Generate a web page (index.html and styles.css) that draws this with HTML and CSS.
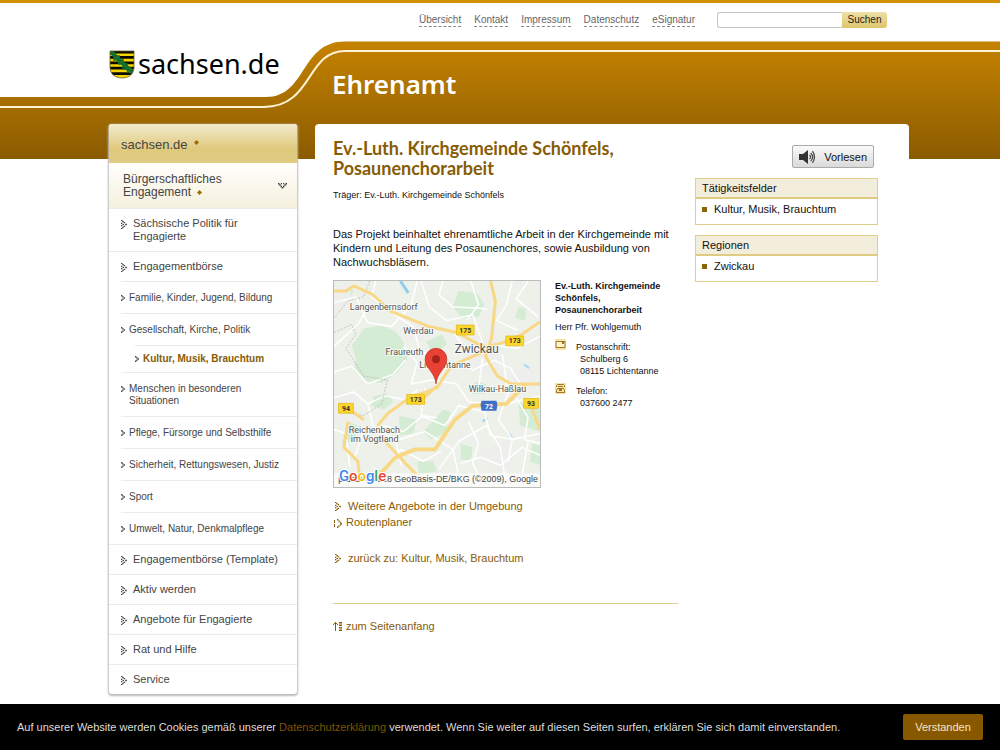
FILE: index.html
```html
<!DOCTYPE html>
<html lang="de">
<head>
<meta charset="utf-8">
<title>Ehrenamt - sachsen.de</title>
<link rel="stylesheet" href="styles.css">
</head>
<body>
<svg class="defs" width="0" height="0" aria-hidden="true">
  <symbol id="dots" viewBox="0 0 6 9"><path d="M0 0h1.500v1H0zM1.300 .9h1.500v1.300H1.300zM2.600 2h1.500v1.300H2.600zM4.200 3.700h1.700v1.600H4.200zM2.600 5.700h1.500V7H2.600zM1.300 6.800h1.500v1.300H1.300zM0 8h1.500v1H0zM0 2.800h1.300V4H0zM1.500 3.900h1.500v1.200H1.500zM0 5h1.300v1.200H0z"/></symbol>
  <symbol id="arrow" viewBox="0 0 4 6"><path d="M0 0h1.400v1.400H0zM1.200 1.200h1.400v1.400H1.200zM2.600 2.300H4v1.400H2.600zM1.200 3.400h1.400v1.400H1.200zM0 4.600h1.400V6H0z"/></symbol>
  <symbol id="spark" viewBox="0 0 5 5"><path d="M2.500 0L5 2.500 2.500 5 0 2.500z"/></symbol>
</svg>

<header class="header">
  <svg class="band" viewBox="0 0 1000 159" preserveAspectRatio="xMidYMin meet" aria-hidden="true">
    <defs><linearGradient id="gold" gradientUnits="userSpaceOnUse" x1="0" y1="42" x2="0" y2="159"><stop offset="0" stop-color="#c58200"/><stop offset=".75" stop-color="#996500"/><stop offset="1" stop-color="#8b5b00"/></linearGradient></defs>
    <path fill="url(#gold)" d="M-2000 97H266C307 97 300 41.500 345 41.500H3000V159H-2000z"/>
    <path fill="none" stroke="#fff3d6" stroke-width="2" d="M-2000 107H264C313 107 306 51 345 51H3000"/>
  </svg>
  <div class="wrap">
    <div class="topline">
      <nav class="meta">
        <a href="#">Übersicht</a><a href="#">Kontakt</a><a href="#">Impressum</a><a href="#">Datenschutz</a><a href="#">eSignatur</a>
      </nav>
      <form class="search"><input type="text" aria-label="Suchbegriff"><button type="button">Suchen</button></form>
    </div>
    <div class="brand">
      <a class="logo" href="#">
        <svg width="26" height="29" viewBox="0 0 26 29" aria-hidden="true">
          <defs><clipPath id="shield"><path d="M1 1H25V17C25 24 20 28 13 28S1 24 1 17z"/></clipPath></defs>
          <g clip-path="url(#shield)"><path fill="#f2d500" d="M0 0h26v29H0z"/><path fill="#0c0a00" d="M0 0h26v3.400H0zM0 6h26v2.800H0zM0 11.400h26v2.800H0zM0 16.800h26v2.800H0zM0 22.200h26V25H0z"/><path d="M0 0L26 25" stroke="#17702c" stroke-width="4"/><path d="M5 2l1 4 4 0 0 4 4 0 0 4 4 0 0 4 4 0 1 4M1 4l4 1 0 5 4 0 1 4 4 0 0 5 4 0 1 4" fill="none" stroke="#17702c" stroke-width="1.600"/></g>
          <path d="M1 1H25V17C25 24 20 28 13 28S1 24 1 17z" fill="none" stroke="#6a6030" stroke-width=".8"/>
        </svg><span>sachsen.de</span></a>
      <div class="site">Ehrenamt</div>
    </div>
  </div>
</header>

<div class="wrap page">
  <nav class="side">
    <a class="home" href="#">sachsen.de <svg class="i-spark"><use href="#spark"/></svg></a>
    <a class="topic" href="#"><span>Bürgerschaftliches Engagement <svg class="i-spark low"><use href="#spark"/></svg></span>
      <svg class="i-down" viewBox="0 0 9 6"><path d="M0 0h1.500v1.500H0zM1.200 1.300h1.500v1.500H1.200zM2.500 2.700H4v1.500H2.500zM3.700 4h1.600v1.600H3.700zM5 2.700h1.500v1.500H5zM6.300 1.300h1.500v1.500H6.300zM7.500 0H9v1.500H7.500zM2.800 0h1.200v1.200H2.800zM5 0h1.200v1.200H5z"/></svg></a>
    <ul>
      <li><a href="#"><svg class="i-dots"><use href="#dots"/></svg><span>Sächsische Politik für Engagierte</span></a></li>
      <li><a href="#"><svg class="i-dots"><use href="#dots"/></svg><span>Engagementbörse</span></a>
        <ul class="sub">
          <li><a href="#"><svg class="i-arrow"><use href="#arrow"/></svg><span>Familie, Kinder, Jugend, Bildung</span></a></li>
          <li><a href="#"><svg class="i-arrow"><use href="#arrow"/></svg><span>Gesellschaft, Kirche, Politik</span></a>
            <ul class="leaf"><li><a href="#"><svg class="i-arrow"><use href="#arrow"/></svg><span>Kultur, Musik, Brauchtum</span></a></li></ul></li>
          <li><a href="#"><svg class="i-arrow"><use href="#arrow"/></svg><span>Menschen in besonderen Situationen</span></a></li>
          <li><a href="#"><svg class="i-arrow"><use href="#arrow"/></svg><span>Pflege, Fürsorge und Selbsthilfe</span></a></li>
          <li><a href="#"><svg class="i-arrow"><use href="#arrow"/></svg><span>Sicherheit, Rettungswesen, Justiz</span></a></li>
          <li><a href="#"><svg class="i-arrow"><use href="#arrow"/></svg><span>Sport</span></a></li>
          <li><a href="#"><svg class="i-arrow"><use href="#arrow"/></svg><span>Umwelt, Natur, Denkmalpflege</span></a></li>
        </ul></li>
      <li><a href="#"><svg class="i-dots"><use href="#dots"/></svg><span>Engagementbörse (Template)</span></a></li>
      <li><a href="#"><svg class="i-dots"><use href="#dots"/></svg><span>Aktiv werden</span></a></li>
      <li><a href="#"><svg class="i-dots"><use href="#dots"/></svg><span>Angebote für Engagierte</span></a></li>
      <li><a href="#"><svg class="i-dots"><use href="#dots"/></svg><span>Rat und Hilfe</span></a></li>
      <li><a href="#"><svg class="i-dots"><use href="#dots"/></svg><span>Service</span></a></li>
    </ul>
  </nav>

  <div class="content">
    <main class="main">
      <h1>Ev.-Luth. Kirchgemeinde Schönfels, Posaunenchorarbeit</h1>
      <p class="carrier">Träger: Ev.-Luth. Kirchgemeinde Schönfels</p>
      <p class="intro">Das Projekt beinhaltet ehrenamtliche Arbeit in der Kirchgemeinde mit Kindern und Leitung des Posaunenchores, sowie Ausbildung von Nachwuchsbläsern.</p>
      <div class="place">
        <svg class="map" viewBox="0 0 208 208" role="img" aria-label="Karte">
          <path fill="#edf1ea" d="M0 0h208v208H0z"/>
          <g fill="#d3ecd3"><path d="M30 48l18-3 14 6 8 10 4 18-10 14-16 10-16-2-12-10 2-12-4-14 6-8zM126 10l18 2 8 12-6 12-16 2-10-12zM186 26l8 2-1 12-10-3zM93 61l16-7 5 10-14 10zM40 116l14-2 6 8-10 8-12-4zM110 130l8 2-6 22-14 6-8-8zM66 136l18 4-4 14-14 2zM186 122l22 8v22l-20-6zM200 164l8 2v20l-10-4zM128 164l12 4-2 14-10-2zM84 182l16 0 4 10-18 4zM14 142l10 4-4 16-12 2zM142 102l12 2-2 10-12 0zM12 4l8 6-6 10-8-4z"/></g>
          <g fill="#eeefed"><path d="M138 56l26-2 8 22-16 18-22-6-6-16zM72 42l16 2 2 16-16 0zM0 108l24 4-2 28-22 4zM150 170l22-6 10 18-14 12-16-8zM178 86l24 0 2 22-20 6zM0 6l16-2 2 22-18 8z"/></g>
          <path d="M67 0l8 12" stroke="#91cdf0" stroke-width="3"/><path d="M150 142l5-4M176 154l4 4M192 84l5 4" stroke="#a6d7f4" stroke-width="2"/>
          <g fill="none" stroke="#fff" stroke-width="1.500" stroke-linejoin="round"><path d="M0 22l22-6 12 26 24 4 20-22 6-24M0 66l24-22 12-20M42 0l-4 16 20 16 22 14 6 22 18 16M70 66l14 16-6 22 20-4 26 4 12 18 30 4 42-10M88 0l8 26 18 14 26-6 10 28M110 0l-4 14 14 12 34 2M120 50l14 22 24-8 26 4 24-12M126 82l14 8 22-10 16 8 14 22M0 118l20-6 14 12 18-8 20 4 12-10M34 124l6 24 22 12 6 26M20 180l10-28 22-6 18 6 20-16 14 2M66 160l26-8 28 18 8 36M92 108l-4 28 24 10 14-20 26 6 6 24 22 4 28-6M106 190l20-28 28-16 14 22 6 40M128 184l20-6 20 8 22-18 18 8M136 142l10 22-6 20 12 24M176 112l-10 28 14 20-4 22M184 118l12 20-4 22 16 4M180 0l-6 24-10 16 22 10M196 0l-12 18 22 18M138 0l8 24-12 16M150 78l-4 30M170 74l6 40M100 74l18 14 18-8M0 92l18-6 16 18 26-10 12-14M196 162l-8 44M0 150l12 4 4 34M54 184l14-14 22 12 18-10"/></g>
          <path fill="none" stroke="#b5b5b5" stroke-width=".8" stroke-dasharray="2 1.500" d="M36 0l-6 16-16 4-14 18M0 52l18-8 4 10-10 14 18 28 24 4-6 24-18 12-20-4"/>
          <g fill="none" stroke="#f8d885" stroke-width="3" stroke-linejoin="round"><path d="M0 10h12l8-5 18 8 20 18 38 15 28 6 22 12 14 4M158 0l5 20-4 38-6 18 12 20 14 8h29M156 66l12-3 20-8 20-14M154 70l-36 16-14 22-28 10-22 16-10 12M104 106l-18 16M10 126l20 14M14 142l-4 26 14 14 2 18M48 158l24 26 16 16M198 124l10 26"/><path stroke-width="4" d="M42 200l20-22 20-8h20l20-30 18-14 34-2 20-20"/></g>
          <g class="place-names"><text x="16" y="29">Langenbernsdorf</text><text x="70" y="54">Werdau</text><text class="town" x="122" y="73">Zwickau</text><text x="52" y="75">Fraureuth</text><text x="86" y="88">Lichtentanne</text><text x="136" y="112">Wilkau-Haßlau</text><text x="15" y="153">Reichenbach</text><text x="17" y="163">im Vogtland</text></g>
          <g fill="#fcd62b" stroke="#d8ac00" stroke-width=".6"><path d="M123.500 44.500h18v10h-18zM173.500 55.500h18v10h-18zM73.500 114.500h18v10h-18zM4.500 123.500h15v10h-15zM191.500 118.500h15v10h-15z"/></g>
          <path fill="#416fc7" d="M149 121h15l1 4-1 6h-15l-1-6z"/>
          <g class="shields"><text x="132.500" y="52">175</text><text x="182.500" y="63">173</text><text x="82.500" y="122">173</text><text x="12" y="131">94</text><text x="199" y="126">93</text><text class="motorway" x="156.500" y="129">72</text></g>
          <path fill="#fff" fill-opacity=".7" d="M0 194h208v14H0z"/>
          <text class="credit" x="206" y="203">p data ©2018 GeoBasis-DE/BKG (©2009), Google</text>
          <text class="google" x="5" y="202"><tspan fill="#4285f4">G</tspan><tspan fill="#ea4335">o</tspan><tspan fill="#fbbc05">o</tspan><tspan fill="#4285f4">g</tspan><tspan fill="#34a853">l</tspan><tspan fill="#ea4335">e</tspan></text>
          <path fill="#e94235" stroke="#b8281f" stroke-width=".6" d="M103 104c-1-12-11-16-11-25a11 11 0 0 1 22 0c0 9-10 13-11 25z"/><circle cx="103" cy="79" r="4" fill="#a52318"/>
        </svg>
        <address class="contact">
          <strong>Ev.-Luth. Kirchgemeinde Schönfels, Posaunenchorarbeit</strong>
          <p>Herr Pfr. Wohlgemuth</p>
          <div class="row"><svg width="11" height="11" viewBox="0 0 11 11"><path fill="#f7e3a5" d="M0 0h11v11H0z"/><path fill="#fff3cf" stroke="#a07420" d="M1 2.500h9v6H1z"/><path fill="#a07420" d="M7 3h2v2H7z"/></svg><div>Postanschrift:<span>Schulberg 6</span><span>08115 Lichtentanne</span></div></div>
          <div class="row"><svg width="11" height="11" viewBox="0 0 11 11"><path fill="#f7e3a5" d="M0 0h11v11H0z"/><path fill="none" stroke="#a07420" d="M1.500 4V2.500l1-1h6l1 1V4M3 3.500h5M2.500 5.500h6l1 2v2h-8v-2z"/><path fill="#a07420" d="M4 6h3v2H4z"/></svg><div>Telefon:<span>037600 2477</span></div></div>
        </address>
      </div>
      <ul class="links">
        <li><a href="#"><svg class="i-link"><use href="#dots"/></svg>Weitere Angebote in der Umgebung</a></li>
        <li><a href="#"><svg class="i-route" viewBox="0 0 8 9"><path d="M0 1h1v3H0zM0 5h1v3H0zM3 0h1.400v1.400H3zM4.400 1.400h1.400v1.400H4.400zM5.800 2.800h1.400v1.400H5.800zM6.600 4H8v1.400H6.600zM5.800 5.200h1.400v1.400H5.800zM4.400 6.400h1.400v1.400H4.400zM3 7.600h1.400V9H3z"/></svg>Routenplaner</a></li>
        <li class="back"><a href="#"><svg class="i-link"><use href="#dots"/></svg>zurück zu: Kultur, Musik, Brauchtum</a></li>
      </ul>
      <div class="foot"><a href="#"><svg class="i-top" viewBox="0 0 9 9"><path d="M2 0h1v9H2zM1 1h3v1H1zM0 2h1v1H0zM4 2h1v1H4zM6 0h3v1.500H6zM6 2.500h3V4H6zM6 5h3v1.500H6zM6 7.500h3V9H6z"/></svg>zum Seitenanfang</a></div>
    </main>
    <aside class="aside">
      <button class="read" type="button"><svg width="17" height="14" viewBox="0 0 17 14"><path fill="#333" d="M0 4h4l5-4v14l-5-4H0z"/><path fill="none" stroke="#444" stroke-width="1.200" d="M10.500 4.800q2.200 2.200 0 4.400M11.700 2.800q4 4.200 0 8.400M13.500 1.200q4 5.800 0 11.600"/></svg>Vorlesen</button>
      <section class="box"><h2>Tätigkeitsfelder</h2><ul><li>Kultur, Musik, Brauchtum</li></ul></section>
      <section class="box"><h2>Regionen</h2><ul><li>Zwickau</li></ul></section>
    </aside>
  </div>
</div>

<div class="cookie">
  <p>Auf unserer Website werden Cookies gemäß unserer <a href="#">Datenschutzerklärung</a> verwendet. Wenn Sie weiter auf diesen Seiten surfen, erklären Sie sich damit einverstanden.</p>
  <button type="button">Verstanden</button>
</div>
</body>
</html>
```
FILE: styles.css
```css
* { box-sizing: border-box; }
body {
  margin: 0;
  background: #fff;
  color: #111;
  font: 11px/14px "Liberation Sans", Arial, sans-serif;
  overflow-x: hidden;
}
ul, p, h1, h2 { margin: 0; padding: 0; font-weight: normal; }
ul { list-style: none; }
a { color: inherit; text-decoration: none; }
button, input { font: inherit; }
svg { flex: none; fill: currentColor; }
.defs { position: absolute; }
.wrap { max-width: 818px; margin: 0 auto; padding-left: 18px; }

/* header */
.header {
  position: relative;
  border-top: 3px solid #d29200;
  height: 159px;
}
.band { position: absolute; left: 0; top: -3px; width: 100%; height: 159px; overflow: visible; }
.header .wrap { position: relative; }
.topline { display: flex; justify-content: flex-end; gap: 22px; padding: 9px 22px 0 0; }
.meta { display: flex; gap: 13px; font-size: 10px; line-height: 13px; color: #666; padding-top: 1px; }
.meta a { border-bottom: 1px dashed #888; height: 14px; }
.search { display: flex; height: 16px; }
.search input {
  width: 125px;
  border: 1px solid #c4c4c4;
  border-right: 0;
  border-radius: 3px 0 0 3px;
  padding: 0 4px;
}
.search button {
  width: 45px;
  padding: 0;
  border: 0;
  border-radius: 0 3px 3px 0;
  background: linear-gradient(#eee0a6, #ddc66c);
  color: #222;
  font-size: 10px;
}
.brand { display: grid; grid-template-columns: 223px 1fr; align-items: start; padding-top: 20px; }
.logo { display: flex; align-items: center; gap: 3px; color: #000; font: 27px/32px "Noto Sans", sans-serif; }
.site { color: #fff; font: 600 26px/34px "Noto Sans", sans-serif; padding-top: 19px; }

/* columns */
.page { position: relative; display: flex; align-items: flex-start; gap: 18px; margin-top: -35px; padding-bottom: 57px; }

/* navigation */
.side {
  flex: 0 0 188px;
  background: #fff;
  border-radius: 3px;
  box-shadow: 0 1px 2px 1px #bbb;
  color: #444;
  line-height: 13px;
}
.side ul a { display: flex; align-items: flex-start; }
.home {
  display: block;
  padding: 14px 12px 12px;
  border-radius: 3px 3px 0 0;
  background: linear-gradient(#f2ebcd, #dfc97c 65%, #dfcb82);
  font-size: 13px;
}
.topic {
  display: flex;
  align-items: center;
  justify-content: space-between;
  padding: 10px 10px 9px 14px;
  background: linear-gradient(#fffefb, #f5f0de);
  font-size: 12px;
}
.i-spark { width: 5px; height: 5px; color: #a06c00; margin-left: 3px; vertical-align: 4px; }
.low { vertical-align: 1px; }
.i-down { width: 9px; height: 6px; }
.i-dots { width: 6px; height: 9px; margin: 3px 6px 0 0; }
.i-arrow { width: 4px; height: 6px; margin: 3px 4px 0 0; }
.side li { border-top: 1px solid #ebebe8; }
.side ul a { padding: 8px 12px; }
.side .sub { margin-left: 12px; font-size: 10px; line-height: 12px; }
.side .sub a { padding: 10px 12px 9px 0; }
.side .leaf { margin-left: 14px; font-weight: bold; color: #875c05; }
.side .leaf a { padding: 7px 0; }
.leaf .i-arrow { color: #444; }

/* content */
.content {
  flex: 1;
  display: flex;
  gap: 17px;
  padding: 14px 31px 0 18px;
  border-radius: 4px;
  background: #fff;
}
.main { flex: 1; }
.main h1 { color: #875c05; font: bold 18px/20px Lato, sans-serif; }
.carrier { margin-top: 10px; font-size: 9px; }
.intro { margin-top: 25px; }
.place { display: flex; gap: 14px; margin-top: 11px; }
.map { width: 208px; height: 208px; border: 1px solid #bbb; }
.place-names { font: 9px Roboto, sans-serif; fill: #555; stroke: #fff; stroke-width: 2px; stroke-opacity: .6; paint-order: stroke; }
.town { font-size: 12px; }
.shields { font: bold 7px Roboto, sans-serif; fill: #333; text-anchor: middle; }
.motorway { fill: #fff; }
.credit { font: 9px "Liberation Sans", Arial, sans-serif; fill: #444; text-anchor: end; }
.google { font: 500 15px Roboto, sans-serif; stroke: #fff; stroke-width: 2px; paint-order: stroke; }
.contact { flex: 1; font: 9px/12px "Liberation Sans", Arial, sans-serif; }
.contact p { margin-top: 5px; }
.row { display: flex; gap: 10px; margin-top: 6px; }
.row div { padding-top: 2px; }
.row span { display: block; padding-left: 4px; }
.links { margin-top: 10px; color: #875c05; line-height: 16px; }
.links a, .foot a { display: flex; align-items: center; color: #875c05; }
.links .back { margin-top: 20px; }
.i-link { width: 6px; height: 9px; margin: 0 7px 0 2px; }
.i-route { width: 8px; height: 9px; margin: 3px 4px 0 1px; }
.i-top { width: 9px; height: 9px; margin-right: 4px; }
.foot { margin-top: 37px; border-top: 1px solid #e0cc88; padding-top: 14px; line-height: 16px; }

/* right column */
.aside { flex: 0 0 183px; display: flex; flex-direction: column; }
.read {
  display: flex;
  align-items: center;
  align-self: flex-end;
  gap: 8px;
  height: 23px;
  margin: 7px 4px 10px 0;
  padding: 0 6px;
  border: 1px solid #aaa;
  border-radius: 2px;
  background: linear-gradient(#fafafa, #dadada);
  color: #111;
}
.box { border: 1px solid #e0cf8c; height: 47px; margin-bottom: 10px; }
.box h2 { padding: 2px 6px; background: #f3eddb; border-bottom: 2px solid #dfcb82; font-size: 11px; line-height: 14px; }
.box li { display: flex; align-items: center; gap: 7px; padding: 3px 6px; }
.box li::before { content: ""; width: 5px; height: 5px; background: #8a6408; }

/* cookie notice */
.cookie {
  position: fixed;
  left: 0;
  right: 0;
  bottom: 0;
  display: flex;
  align-items: center;
  justify-content: space-between;
  height: 46px;
  padding: 0 17px;
  background: #000;
  color: #ddd;
}
.cookie a { color: #805500; }
.cookie button { height: 26px; width: 80px; padding: 0; border: 0; border-radius: 2px; background: #875800; color: #f3e6c8; }
```
